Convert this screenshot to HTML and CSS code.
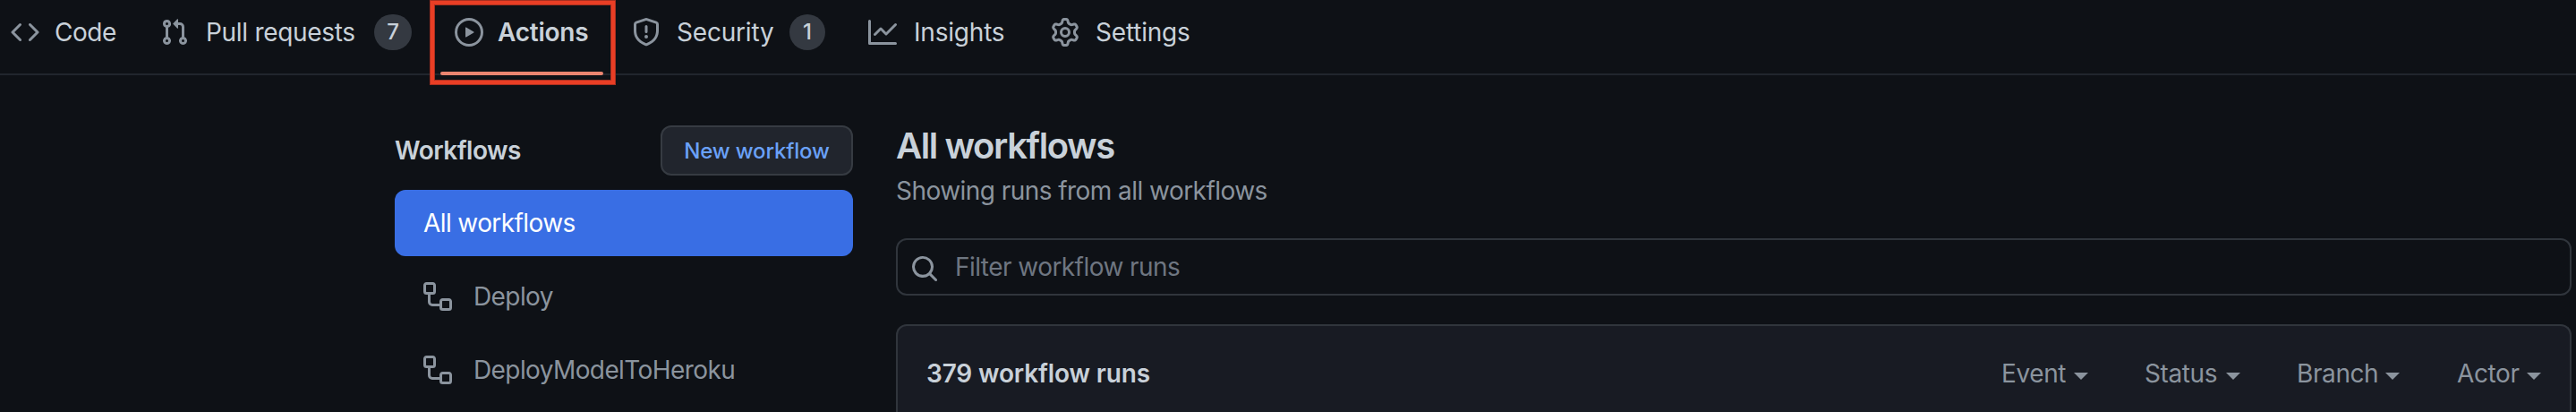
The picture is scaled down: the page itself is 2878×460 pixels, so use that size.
FILE: index.html
```html
<!DOCTYPE html>
<html lang="en">
<head>
<meta charset="utf-8">
<title>Actions</title>
<link rel="stylesheet" href="styles.css">
</head>
<body>
<nav class="nav">
  <a class="tab tab-code">
    <svg class="icon" viewBox="0 0 16 16"><path d="m11.28 3.22 4.25 4.25a.75.75 0 0 1 0 1.06l-4.25 4.25a.749.749 0 0 1-1.275-.326.749.749 0 0 1 .215-.734L13.94 8l-3.72-3.72a.749.749 0 0 1 .326-1.275.749.749 0 0 1 .734.215Zm-6.56 0a.751.751 0 0 1 1.042.018.751.751 0 0 1 .018 1.042L2.06 8l3.72 3.72a.749.749 0 0 1-.326 1.275.749.749 0 0 1-.734-.215L.47 8.53a.75.75 0 0 1 0-1.06Z"/></svg>
    <span>Code</span>
  </a>
  <a class="tab tab-pulls">
    <svg class="icon" viewBox="0 0 16 16"><path d="M1.5 3.25a2.25 2.25 0 1 1 3 2.122v5.256a2.251 2.251 0 1 1-1.5 0V5.372A2.25 2.25 0 0 1 1.5 3.25Zm5.677-.177L9.573.677A.25.25 0 0 1 10 .854V2.5h1A2.5 2.5 0 0 1 13.500 5v5.628a2.251 2.251 0 1 1-1.5 0V5a1 1 0 0 0-1-1h-1v1.646a.25.25 0 0 1-.427.177L7.177 3.427a.25.25 0 0 1 0-.354ZM3.750 2.500a.75.75 0 1 0 0 1.500.75.75 0 0 0 0-1.500Zm0 9.500a.75.75 0 1 0 0 1.500.75.75 0 0 0 0-1.500Zm8.250.75a.75.75 0 1 0 1.500 0 .75.75 0 0 0-1.500 0Z"/></svg>
    <span>Pull requests</span>
    <b class="count count-pulls">7</b>
  </a>
  <a class="tab tab-actions">
    <svg class="icon" viewBox="0 0 16 16"><path d="M8 0a8 8 0 1 1 0 16A8 8 0 0 1 8 0ZM1.500 8a6.500 6.500 0 1 0 13 0 6.500 6.500 0 0 0-13 0Zm4.879-2.773 4.264 2.559a.25.25 0 0 1 0 .428l-4.264 2.559A.25.25 0 0 1 6 10.559V5.442a.25.25 0 0 1 .379-.215Z"/></svg>
    <span>Actions</span>
  </a>
  <a class="tab tab-security">
    <svg class="icon" viewBox="0 0 16 16"><path d="M7.467.133a1.748 1.748 0 0 1 1.066 0l5.250 1.680A1.750 1.750 0 0 1 15 3.480V7c0 1.566-.320 3.182-1.303 4.682-.983 1.498-2.585 2.813-5.032 3.855a1.697 1.697 0 0 1-1.330 0c-2.447-1.042-4.049-2.357-5.032-3.855C1.320 10.182 1 8.566 1 7V3.480a1.755 1.755 0 0 1 1.217-1.667Zm.610 1.429a.25.25 0 0 0-.153 0l-5.250 1.680a.25.25 0 0 0-.174.238V7c0 1.358.275 2.666 1.057 3.860.784 1.194 2.121 2.340 4.366 3.297a.196.196 0 0 0 .154 0c2.245-.956 3.582-2.104 4.366-3.298C13.225 9.666 13.500 8.360 13.500 7V3.480a.251.251 0 0 0-.174-.237ZM8.750 4.750v3a.75.75 0 0 1-1.500 0v-3a.75.75 0 0 1 1.500 0ZM9 10.500a1 1 0 1 1-2 0 1 1 0 0 1 2 0Z"/></svg>
    <span>Security</span>
    <b class="count">1</b>
  </a>
  <a class="tab tab-insights">
    <svg class="icon" viewBox="0 0 16 16"><path d="M1.500 1.750V13.500h13.750a.75.75 0 0 1 0 1.500H.75a.75.75 0 0 1-.75-.75V1.750a.75.75 0 0 1 1.500 0Zm14.280 2.530-5.250 5.250a.75.75 0 0 1-1.060 0L7 7.060 4.280 9.780a.751.751 0 0 1-1.042-.018.751.751 0 0 1-.018-1.042l3.250-3.250a.75.75 0 0 1 1.060 0L10 7.940l4.720-4.720a.751.751 0 0 1 1.042.018.751.751 0 0 1 .018 1.042Z"/></svg>
    <span>Insights</span>
  </a>
  <a class="tab tab-settings">
    <svg class="icon" viewBox="0 0 16 16"><path d="M8 0a8.200 8.200 0 0 1 .701.031C9.444.095 9.990.645 10.160 1.290l.288 1.107c.018.066.079.158.212.224.231.114.454.243.668.386.123.082.233.090.299.071l1.103-.303c.644-.176 1.392.021 1.820.630.270.385.506.792.704 1.218.315.675.111 1.422-.364 1.891l-.814.806c-.049.048-.098.147-.088.294.016.257.016.515 0 .772-.010.147.038.246.088.294l.814.806c.475.469.679 1.216.364 1.891a7.977 7.977 0 0 1-.704 1.217c-.428.610-1.176.807-1.820.630l-1.102-.302c-.067-.019-.177-.011-.300.071a5.909 5.909 0 0 1-.668.386c-.133.066-.194.158-.211.224l-.290 1.106c-.168.646-.715 1.196-1.458 1.260a8.006 8.006 0 0 1-1.402 0c-.743-.064-1.289-.614-1.458-1.260l-.289-1.106c-.018-.066-.079-.158-.212-.224a5.738 5.738 0 0 1-.668-.386c-.123-.082-.233-.090-.299-.071l-1.103.303c-.644.176-1.392-.021-1.820-.630a8.120 8.120 0 0 1-.704-1.218c-.315-.675-.111-1.422.363-1.891l.815-.806c.050-.048.098-.147.088-.294a6.214 6.214 0 0 1 0-.772c.010-.147-.038-.246-.088-.294l-.815-.806C.635 6.045.431 5.298.746 4.623a7.920 7.920 0 0 1 .704-1.217c.428-.610 1.176-.807 1.820-.630l1.102.302c.067.019.177.011.300-.071.214-.143.437-.272.668-.386.133-.066.194-.158.211-.224l.290-1.106C6.009.645 6.556.095 7.299.030 7.530.010 7.764 0 8 0Zm-.571 1.525c-.036.003-.108.036-.137.146l-.289 1.105c-.147.561-.549.967-.998 1.189-.173.086-.340.183-.500.290-.417.278-.970.423-1.529.270l-1.103-.303c-.109-.030-.175.016-.195.045-.220.312-.412.644-.573.990-.014.031-.021.110.059.190l.815.806c.411.406.562.957.530 1.456a4.709 4.709 0 0 0 0 .582c.032.499-.119 1.050-.530 1.456l-.815.806c-.081.080-.073.159-.059.190.162.346.353.677.573.989.020.030.085.076.195.046l1.102-.303c.560-.153 1.113-.008 1.530.270.161.107.328.204.501.290.447.222.850.629.997 1.189l.289 1.105c.029.109.101.143.137.146a6.600 6.600 0 0 0 1.142 0c.036-.003.108-.036.137-.146l.289-1.105c.147-.561.549-.967.998-1.189.173-.086.340-.183.500-.290.417-.278.970-.423 1.529-.270l1.103.303c.109.029.175-.016.195-.045.220-.313.411-.644.573-.990.014-.031.021-.110-.059-.190l-.815-.806c-.411-.406-.562-.957-.530-1.456a4.709 4.709 0 0 0 0-.582c-.032-.499.119-1.050.530-1.456l.815-.806c.081-.080.073-.159.059-.190a6.464 6.464 0 0 0-.573-.989c-.020-.030-.085-.076-.195-.046l-1.102.303c-.560.153-1.113.008-1.530-.270a4.440 4.440 0 0 0-.501-.290c-.447-.222-.850-.629-.997-1.189l-.289-1.105c-.029-.110-.101-.143-.137-.146a6.600 6.600 0 0 0-1.142 0ZM11 8a3 3 0 1 1-6 0 3 3 0 0 1 6 0ZM9.500 8a1.500 1.500 0 1 0-3.001.001A1.500 1.500 0 0 0 9.500 8Z"/></svg>
    <span>Settings</span>
  </a>
</nav>
<div class="page">
  <aside class="sidebar">
    <div class="sidebar-head">
      <h2 class="sidebar-title">Workflows</h2>
      <a class="button">New workflow</a>
    </div>
    <a class="item item-active"><span>All workflows</span></a>
    <a class="item">
      <svg class="icon" viewBox="0 0 16 16"><path d="M0 1.750C0 .784.784 0 1.750 0h3.500C6.216 0 7 .784 7 1.750v3.500A1.750 1.750 0 0 1 5.250 7H4v4a1 1 0 0 0 1 1h4v-1.250C9 9.784 9.784 9 10.750 9h3.500c.966 0 1.750.784 1.750 1.750v3.500A1.750 1.750 0 0 1 14.250 16h-3.500A1.750 1.750 0 0 1 9 14.250v-.75H5A2.500 2.500 0 0 1 2.500 11V7h-.75A1.750 1.750 0 0 1 0 5.250Zm1.750-.25a.25.25 0 0 0-.25.25v3.500c0 .138.112.250.250.250h3.500a.25.25 0 0 0 .25-.25v-3.500a.25.25 0 0 0-.25-.25Zm9 9a.25.25 0 0 0-.25.25v3.500c0 .138.112.250.250.250h3.500a.25.25 0 0 0 .25-.25v-3.500a.25.25 0 0 0-.25-.25Z"/></svg>
      <span>Deploy</span>
    </a>
    <a class="item">
      <svg class="icon" viewBox="0 0 16 16"><path d="M0 1.750C0 .784.784 0 1.750 0h3.500C6.216 0 7 .784 7 1.750v3.500A1.750 1.750 0 0 1 5.250 7H4v4a1 1 0 0 0 1 1h4v-1.250C9 9.784 9.784 9 10.750 9h3.500c.966 0 1.750.784 1.750 1.750v3.500A1.750 1.750 0 0 1 14.250 16h-3.500A1.750 1.750 0 0 1 9 14.250v-.75H5A2.500 2.500 0 0 1 2.500 11V7h-.75A1.750 1.750 0 0 1 0 5.250Zm1.750-.25a.25.25 0 0 0-.25.25v3.500c0 .138.112.250.250.250h3.500a.25.25 0 0 0 .25-.25v-3.500a.25.25 0 0 0-.25-.25Zm9 9a.25.25 0 0 0-.25.25v3.500c0 .138.112.250.250.250h3.500a.25.25 0 0 0 .25-.25v-3.500a.25.25 0 0 0-.25-.25Z"/></svg>
      <span>DeployModelToHeroku</span>
    </a>
  </aside>
  <main class="main">
    <h1 class="title">All workflows</h1>
    <p class="subtitle">Showing runs from all workflows</p>
    <div class="filter">
      <svg class="icon search-icon" viewBox="0 0 16 16"><path d="M10.680 11.740a6 6 0 0 1-7.922-8.982 6 6 0 0 1 8.982 7.922l3.040 3.040a.749.749 0 0 1-.326 1.275.749.749 0 0 1-.734-.215ZM11.500 7a4.499 4.499 0 1 0-8.997 0A4.499 4.499 0 0 0 11.500 7Z"/></svg>
      <span class="placeholder">Filter workflow runs</span>
    </div>
    <section class="runs">
      <h3 class="runs-count">379 workflow runs</h3>
      <div class="menus">
        <span class="menu menu-event">Event</span>
        <span class="menu menu-status">Status</span>
        <span class="menu menu-branch">Branch</span>
        <span class="menu menu-actor">Actor</span>
      </div>
    </section>
  </main>
</div>
</body>
</html>
```

FILE: styles.css
```css
*, *::before, *::after { box-sizing: border-box; }
html { overflow: hidden; }
body {
  margin: 0;
  height: 460px;
  overflow: hidden;
  background: #0e1116;
  color: #c9d1d9;
  font: 430 28px/42px Inter, "Liberation Sans", sans-serif;
  white-space: nowrap;
}
h1, h2, h3, p { margin: 0; }
.icon { width: 32px; height: 32px; flex: none; fill: #8b949e; }

.nav {
  display: flex;
  height: 84px;
  padding-left: 12px;
  border-bottom: 2px solid #21262d;
}
.tab {
  position: relative;
  display: flex;
  align-items: center;
  flex: none;
  gap: 18px;
  height: 72px;
  letter-spacing: -0.2px;
}
.tab-code { width: 167px; gap: 17px; letter-spacing: -0.5px; }
.tab-pulls { width: 329px; gap: 19px; letter-spacing: -0.3px; }
.tab-actions { width: 198px; gap: 16px; font-weight: 600; letter-spacing: -0.25px; }
.tab-security { width: 264px; }
.tab-insights { width: 204px; gap: 19px; }
/* Selected tab underline */
.tab-actions::before {
  content: "";
  position: absolute;
  left: -16px;
  top: 80px;
  width: 182px;
  height: 4px;
  border-radius: 2px;
  background: #ec8570;
}
/* Highlight frame around the tab */
.tab-actions::after {
  content: "";
  position: absolute;
  left: -27px;
  top: 1px;
  width: 206px;
  height: 93px;
  border: 4px solid #e93e25;
  box-shadow: 0 0 0 1px #a93020, inset 0 0 0 1px #a93020;
}
.count {
  position: absolute;
  left: 176px;
  width: 40px;
  height: 40px;
  border-radius: 20px;
  background: #343941;
  font-size: 24px;
  font-weight: 500;
  line-height: 40px;
  text-align: center;
  letter-spacing: 0;
}
.count-pulls { left: 239px; width: 42px; }

.page { display: flex; gap: 48px; padding: 56px 5px 0 441px; }
.sidebar { width: 512px; flex: none; }
.sidebar-head {
  display: flex;
  align-items: center;
  justify-content: space-between;
  height: 56px;
  margin-bottom: 16px;
}
.sidebar-title { font-size: 28px; font-weight: 600; letter-spacing: -0.5px; }
.button {
  width: 215px;
  height: 56px;
  border: 2px solid #363b42;
  border-radius: 12px;
  background: #21252d;
  color: #6aa1f8;
  font-size: 24px;
  font-weight: 500;
  line-height: 53px;
  text-align: center;
  letter-spacing: -0.15px;
}
.item {
  display: flex;
  align-items: center;
  gap: 24px;
  height: 74px;
  margin-bottom: 8px;
  padding-left: 32px;
  border-radius: 12px;
  color: #8b949e;
  letter-spacing: -0.6px;
}
.item-active { background: #396ee4; color: #fff; }

.main { flex: 1; }
.title { margin-top: -2px; font-size: 40px; font-weight: 600; line-height: 50px; letter-spacing: -1.4px; }
.subtitle { margin-top: 4px; color: #8b949e; letter-spacing: -0.55px; }
.filter {
  display: flex;
  align-items: center;
  gap: 18px;
  height: 64px;
  margin-top: 32px;
  padding-left: 14px;
  border: 2px solid #30353c;
  border-radius: 12px;
}
.search-icon { margin-top: 4px; }
.placeholder { color: #6e7681; letter-spacing: -0.55px; }
.runs {
  display: flex;
  align-items: center;
  justify-content: space-between;
  height: 108px;
  margin-top: 32px;
  padding: 0 0 0 32px;
  border: 2px solid #30353c;
  border-bottom: 0;
  border-radius: 12px 12px 0 0;
  background: #181b23;
}
.runs-count { font-size: 28px; font-weight: 600; letter-spacing: -0.15px; }
.menus { display: flex; color: #8b949e; letter-spacing: -0.4px; }
.menu { display: flex; align-items: center; justify-content: space-between; flex: none; }
.menu::after {
  content: "";
  margin-top: 6px;
  border: 8px solid transparent;
  border-top-color: #8b949e;
  border-bottom: 0;
}
.menu-event { width: 97px; margin-right: 63px; }
.menu-status { width: 107px; margin-right: 63px; }
.menu-branch { width: 115px; margin-right: 64px; }
.menu-actor { width: 94px; margin-right: 32px; }
```
